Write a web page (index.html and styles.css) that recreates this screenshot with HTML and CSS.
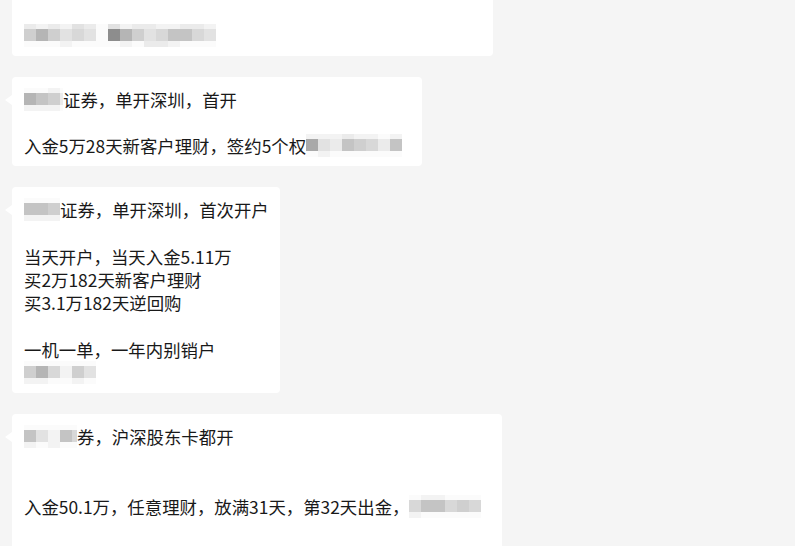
FILE: index.html
```html
<!DOCTYPE html>
<html lang="zh-CN">
<head>
<meta charset="utf-8">
<title>聊天记录</title>
<link rel="stylesheet" href="styles.css">
</head>
<body>
<div class="chat">
  <div class="bubble b1">
    <div class="line">&nbsp;</div>
    <div class="line"><span class="mosaic"><span class="mrow ra"><i class="c8"></i><i class="c9"></i><i class="c8"></i><i class="c9"></i><i class="c7"></i><i class="c8"></i><i class="c10"></i><i class="c7"></i><i class="c9"></i><i class="c8"></i><i class="c8"></i><i class="c9"></i><i class="c9"></i><i class="c8"></i><i class="c8"></i><i class="c9"></i></span><span class="mrow rb"><i class="c5"></i><i class="c3"></i><i class="c5"></i><i class="c7"></i><i class="c6"></i><i class="c7"></i><i class="c10"></i><i class="c1"></i><i class="c3"></i><i class="c5"></i><i class="c7"></i><i class="c6"></i><i class="c4"></i><i class="c4"></i><i class="c6"></i><i class="c7"></i></span><span class="mrow rc"><i class="c10"></i><i class="c10"></i><i class="c10"></i><i class="c9"></i><i class="c10"></i><i class="c10"></i><i class="c10"></i><i class="c10"></i><i class="c9"></i><i class="c10"></i><i class="c8"></i><i class="c8"></i><i class="c9"></i><i class="c10"></i><i class="c10"></i><i class="c10"></i></span></span></div>
  </div>

  <div class="bubble b2 tail">
    <div class="line"><span class="mosaic w39"><span class="mrow ra"><i class="c10"></i><i class="c10"></i><i class="c9"></i><i class="c10"></i></span><span class="mrow rb"><i class="c3"></i><i class="c4"></i><i class="c5"></i><i class="c8"></i></span><span class="mrow rc"><i class="c9"></i><i class="c9"></i><i class="c9"></i><i class="c10"></i></span></span>证券，单开深圳，首开</div>
    <div class="line">&nbsp;</div>
    <div class="line">入金5万28天新客户理财，签约5个权<span class="mosaic"><span class="mrow ra"><i class="c9"></i><i class="c9"></i><i class="c9"></i><i class="c8"></i><i class="c9"></i><i class="c9"></i><i class="c10"></i><i class="c9"></i></span><span class="mrow rb"><i class="c2"></i><i class="c7"></i><i class="c8"></i><i class="c4"></i><i class="c5"></i><i class="c6"></i><i class="c8"></i><i class="c4"></i></span><span class="mrow rc"><i class="c10"></i><i class="c9"></i><i class="c10"></i><i class="c10"></i><i class="c10"></i><i class="c10"></i><i class="c10"></i><i class="c10"></i></span></span></div>
  </div>

  <div class="bubble b3 tail">
    <div class="line"><span class="mosaic"><span class="mrow ra"><i class="c10"></i><i class="c10"></i><i class="c10"></i></span><span class="mrow rb"><i class="c4"></i><i class="c4"></i><i class="c5"></i></span><span class="mrow rc"><i class="c9"></i><i class="c9"></i><i class="c9"></i></span></span>证券，单开深圳，首次开户</div>
    <div class="line">&nbsp;</div>
    <div class="line">当天开户，当天入金5.11万</div>
    <div class="line">买2万182天新客户理财</div>
    <div class="line">买3.1万182天逆回购</div>
    <div class="line">&nbsp;</div>
    <div class="line">一机一单，一年内别销户</div>
    <div class="line"><span class="mosaic"><span class="mrow ra"><i class="c10"></i><i class="c10"></i><i class="c10"></i><i class="c10"></i><i class="c10"></i><i class="c10"></i></span><span class="mrow rb"><i class="c5"></i><i class="c3"></i><i class="c6"></i><i class="c9"></i><i class="c5"></i><i class="c7"></i></span><span class="mrow rc"><i class="c9"></i><i class="c9"></i><i class="c10"></i><i class="c10"></i><i class="c9"></i><i class="c10"></i></span></span></div>
  </div>

  <div class="bubble b4 tail">
    <div class="line"><span class="mosaic w53"><span class="mrow ra"><i class="c10"></i><i class="c10"></i><i class="c10"></i><i class="c10"></i><i class="c10"></i></span><span class="mrow rb"><i class="c4"></i><i class="c7"></i><i class="c9"></i><i class="c4"></i><i class="c6"></i></span><span class="mrow rc"><i class="c9"></i><i class="c10"></i><i class="c9"></i><i class="c10"></i><i class="c10"></i></span></span>券，沪深股东卡都开</div>
    <div class="line">&nbsp;</div>
    <div class="line">&nbsp;</div>
    <div class="line">入金50.1万，任意理财，放满31天，第32天出金，<span class="mosaic"><span class="mrow ra"><i class="c10"></i><i class="c9"></i><i class="c9"></i><i class="c10"></i><i class="c10"></i><i class="c10"></i></span><span class="mrow rb"><i class="c6"></i><i class="c4"></i><i class="c4"></i><i class="c6"></i><i class="c5"></i><i class="c6"></i></span><span class="mrow rc"><i class="c9"></i><i class="c10"></i><i class="c10"></i><i class="c10"></i><i class="c10"></i><i class="c10"></i></span></span></div>
    <div class="line">&nbsp;</div>
    <div class="line">&nbsp;</div>
  </div>
</div>
</body>
</html>
```

FILE: styles.css
```css
html, body {
  margin: 0;
  padding: 0;
}

body {
  background: #f5f5f5;
  font-family: "Microsoft YaHei", "Noto Sans CJK SC", "Noto Sans", sans-serif;
  font-size: 17.4px;
  color: #191919;
  width: 795px;
  height: 546px;
  overflow: hidden;
}

.chat {
  display: flex;
  flex-direction: column;
  align-items: flex-start;
  gap: 21px;
  padding-left: 12px;
  margin-top: -10px;
}

.bubble {
  position: relative;
  background: #ffffff;
  border-radius: 4px;
  padding: 10.5px 12px 9px 12px;
  white-space: nowrap;
}

.tail::before {
  content: "";
  position: absolute;
  left: -7px;
  top: 18px;
  width: 0;
  height: 0;
  border-top: 5px solid transparent;
  border-bottom: 5px solid transparent;
  border-right: 7px solid #ffffff;
}

.b1 { width: 457px; }
.b2 { width: 386px; }
.b3 { width: 244px; }
.b4 { width: 466px; }

.line {
  height: 23.3px;
  line-height: 23.3px;
}

.mosaic {
  display: inline-flex;
  flex-direction: column;
  vertical-align: top;
  height: 23px;
  overflow: hidden;
}

.mosaic.w39 { width: 39px; }
.mosaic.w53 { width: 53px; }

.mrow {
  display: flex;
}

.mrow.ra { height: 5px; }
.mrow.rb { height: 12px; }
.mrow.rc { height: 6px; }

.mrow i {
  display: block;
  flex: 0 0 12px;
  width: 12px;
  height: 100%;
}

.c1 { background: #8d8d8d; }
.c2 { background: #a9a9a9; }
.c3 { background: #b5b5b5; }
.c4 { background: #c4c4c4; }
.c5 { background: #cfcfcf; }
.c6 { background: #d8d8d8; }
.c7 { background: #e2e2e2; }
.c8 { background: #ebebeb; }
.c9 { background: #f3f3f3; }
.c10 { background: #fbfbfb; }
```
